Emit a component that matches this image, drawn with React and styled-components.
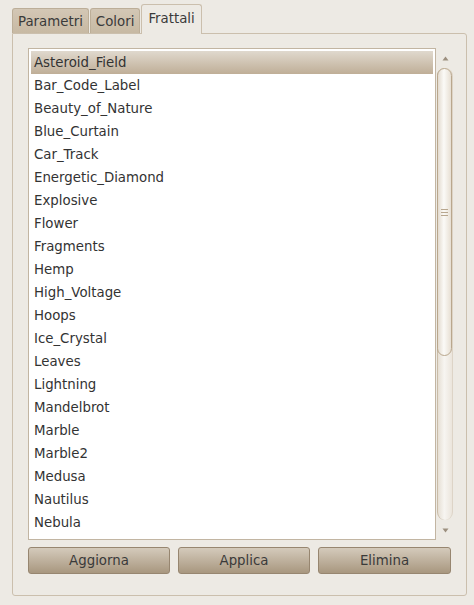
import React from "react";
import styled, { createGlobalStyle } from "styled-components";

const GlobalStyle = createGlobalStyle`
  html, body {
    margin: 0;
    padding: 0;
    background: #edeae4;
  }
  body {
    font-family: "DejaVu Sans", "Liberation Sans", sans-serif;
    font-size: 13.33px;
    color: #333;
  }
`;

const Window = styled.div`
  width: 474px;
  height: 605px;
  box-sizing: border-box;
  padding: 4px 7px 0 12px;
  background: #edeae4;
`;

const TabBar = styled.div`
  display: flex;
  align-items: flex-end;
  gap: 1px;
  position: relative;
  z-index: 1;
  margin-bottom: -1px;
`;

const Tab = styled.div`
  box-sizing: border-box;
  height: ${(p) => (p.$active ? "30px" : "25px")};
  margin-bottom: ${(p) => (p.$active ? "0" : "1px")};
  padding: ${(p) => (p.$active ? "0 6px 2px" : "0 5px")};
  display: flex;
  align-items: center;
  border: 1px solid ${(p) => (p.$active ? "#cbbfad" : "#bcae98")};
  border-bottom: none;
  border-radius: 3px 3px 0 0;
  background: ${(p) =>
    p.$active ? "#edeae4" : "linear-gradient(#d3c7b5, #c7b9a3)"};
  color: #3a3a3a;
  white-space: nowrap;
`;

const Panel = styled.div`
  box-sizing: border-box;
  border: 1px solid #cbbfad;
  border-radius: 0 3px 3px 3px;
  padding: 14px 13px 21px 15px;
`;

const Scrolled = styled.div`
  display: flex;
  height: 492px;
`;

const ListFrame = styled.div`
  flex: 1;
  border: 1px solid #c2b5a2;
  background: #fff;
  padding: 2px;
  overflow: hidden;
`;

const Row = styled.div`
  height: 23px;
  line-height: 23px;
  padding-left: 3px;
  color: #333;
  background: ${(p) =>
    p.$selected ? "linear-gradient(#e0d9ce, #bfae97)" : "transparent"};
  white-space: nowrap;
`;

const ScrollBar = styled.div`
  width: 16px;
  margin-left: 1px;
  display: flex;
  flex-direction: column;
`;

const Arrow = styled.div`
  height: 20px;
  display: flex;
  align-items: center;
  justify-content: center;
`;

const Trough = styled.div`
  flex: 1;
  border-radius: 8px;
  border-left: 1px solid #c9bca8;
  border-right: 1px solid #ddd4c7;
  background: linear-gradient(to right, #e6dfd4, #f7f5f1 45%, #ebe5dc);
  box-sizing: border-box;
`;

const Thumb = styled.div`
  height: 288px;
  box-sizing: border-box;
  border: 1px solid #b9a78d;
  border-radius: 8px;
  margin-left: -1px;
  background: linear-gradient(to right, #e3dbcf, #fbfaf7 45%, #e7dfd3);
  display: flex;
  flex-direction: column;
  align-items: center;
  justify-content: center;
  gap: 2px;
`;

const Grip = styled.span`
  width: 7px;
  height: 1px;
  background: #b8a78f;
`;

const ButtonRow = styled.div`
  display: grid;
  grid-template-columns: 142px 132px 133px;
  column-gap: 8px;
  margin-top: 7px;
`;

const Button = styled.button`
  height: 27px;
  box-sizing: border-box;
  border: 1px solid #978670;
  border-radius: 3px;
  background: linear-gradient(#d4cabb, #a8977f);
  font-family: inherit;
  font-size: 13.33px;
  color: #3a3a3a;
  padding: 0;
`;

const fractals = [
  "Asteroid_Field",
  "Bar_Code_Label",
  "Beauty_of_Nature",
  "Blue_Curtain",
  "Car_Track",
  "Energetic_Diamond",
  "Explosive",
  "Flower",
  "Fragments",
  "Hemp",
  "High_Voltage",
  "Hoops",
  "Ice_Crystal",
  "Leaves",
  "Lightning",
  "Mandelbrot",
  "Marble",
  "Marble2",
  "Medusa",
  "Nautilus",
  "Nebula",
];

const Triangle = ({ down }) => (
  <svg width="7" height="5" viewBox="0 0 7 5">
    <path
      d={down ? "M0.5 0.5 L6.5 0.5 L3.5 4.5 Z" : "M0.5 4.5 L6.5 4.5 L3.5 0.5 Z"}
      fill="#9c8f7e"
    />
  </svg>
);

export default function App() {
  return (
    <Window>
      <GlobalStyle />
      <TabBar>
        <Tab>Parametri</Tab>
        <Tab>Colori</Tab>
        <Tab $active>Frattali</Tab>
      </TabBar>
      <Panel>
        <Scrolled>
          <ListFrame>
            {fractals.map((name, i) => (
              <Row key={name} $selected={i === 0}>
                {name}
              </Row>
            ))}
          </ListFrame>
          <ScrollBar>
            <Arrow>
              <Triangle />
            </Arrow>
            <Trough>
              <Thumb>
                <Grip />
                <Grip />
                <Grip />
              </Thumb>
            </Trough>
            <Arrow>
              <Triangle down />
            </Arrow>
          </ScrollBar>
        </Scrolled>
        <ButtonRow>
          <Button>Aggiorna</Button>
          <Button>Applica</Button>
          <Button>Elimina</Button>
        </ButtonRow>
      </Panel>
    </Window>
  );
}
